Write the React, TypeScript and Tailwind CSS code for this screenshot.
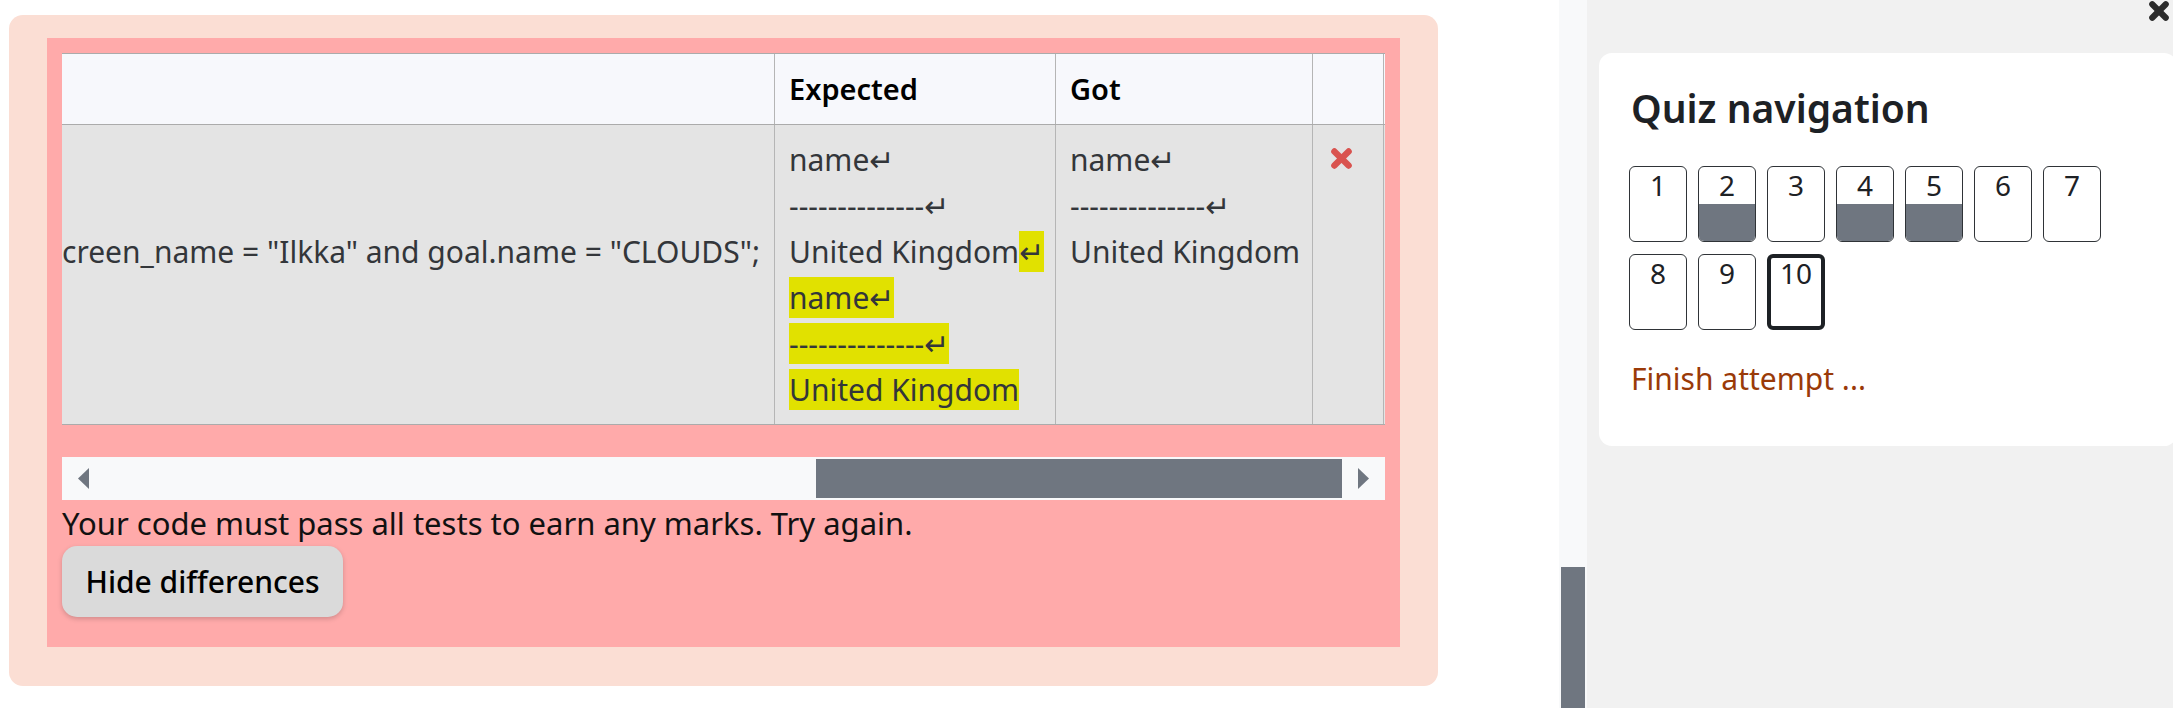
import React from "react";

const FONT = { fontFamily: '"Noto Sans", "Open Sans", "DejaVu Sans", sans-serif' };

function XIcon({ color, className }: { color: string; className: string }) {
  return (
    <svg viewBox="0 0 21 21" className={className}>
      <line x1="3.4" y1="3.4" x2="17.6" y2="17.6" stroke={color} strokeWidth="6.4" strokeLinecap="round" />
      <line x1="17.6" y1="3.4" x2="3.4" y2="17.6" stroke={color} strokeWidth="6.4" strokeLinecap="round" />
    </svg>
  );
}

function Hl({ children }: { children: React.ReactNode }) {
  return <span className="bg-[#e1e100]">{children}</span>;
}

function NavButton({ n, filled, current }: { n: number; filled?: boolean; current?: boolean }) {
  return (
    <div
      className={
        current
          ? "w-[58px] h-[76px] rounded-[6px] border-[4px] border-[#1d2125] bg-white overflow-hidden flex flex-col"
          : "w-[58px] h-[76px] rounded-[6px] border border-[#2f3337] bg-white overflow-hidden flex flex-col"
      }
    >
      <div
        className={
          current
            ? "h-[33px] leading-[31px] text-[28px] text-center text-[#1d2125]"
            : "h-[37px] leading-[37px] text-[28px] text-center text-[#1d2125]"
        }
      >
        {n}
      </div>
      <div className={filled ? "flex-1 bg-[#6f7680]" : "flex-1"} />
    </div>
  );
}

export default function App() {
  return (
    <div className="flex w-[2173px] h-[708px] overflow-hidden bg-white" style={FONT}>
      {/* Left content */}
      <div className="w-[1559px] shrink-0 pl-[9px] pt-[15px]">
        <div className="w-[1429px] h-[671px] rounded-[14px] bg-[#fbded4] pt-[23px] pl-[38px]">
          <div className="w-[1353px] h-[609px] bg-[#ffaaaa] p-[15px] flex flex-col">
            {/* Table */}
            <div className="w-[1323px] overflow-hidden text-[30px]">
              <div className="flex h-[72px] bg-[#f7f8fc] border-t border-b border-[#ababab]">
                <div className="w-[713px] shrink-0 border-r border-[#b5b5b5]" />
                <div className="w-[281px] shrink-0 border-r border-[#b5b5b5] pl-[14px] flex items-center font-semibold text-[29px] text-black">
                  Expected
                </div>
                <div className="w-[257px] shrink-0 border-r border-[#b5b5b5] pl-[14px] flex items-center font-semibold text-[29px] text-black">
                  Got
                </div>
                <div className="w-[71px] shrink-0 border-r border-[#b5b5b5]" />
              </div>
              <div className="flex h-[300px] bg-[#e4e4e4] border-b border-[#ababab] text-[#33363a]">
                <div className="w-[713px] shrink-0 border-r border-[#b5b5b5] overflow-hidden flex items-center justify-end pr-[14px]">
                  <div className="leading-[46px] pb-[46px] whitespace-pre">
                    {'where user.screen_name = "Ilkka" and goal.name = "CLOUDS";'}
                  </div>
                </div>
                <div className="w-[281px] shrink-0 border-r border-[#b5b5b5] pl-[14px] pt-[12px] leading-[46px] whitespace-pre">
                  <div>name↵</div>
                  <div>--------------↵</div>
                  <div>
                    United Kingdom<Hl>↵</Hl>
                  </div>
                  <div>
                    <Hl>name↵</Hl>
                  </div>
                  <div>
                    <Hl>--------------↵</Hl>
                  </div>
                  <div>
                    <Hl>United Kingdom</Hl>
                  </div>
                </div>
                <div className="w-[257px] shrink-0 border-r border-[#b5b5b5] pl-[14px] pt-[12px] leading-[46px] whitespace-pre">
                  <div>name↵</div>
                  <div>--------------↵</div>
                  <div>United Kingdom</div>
                </div>
                <div className="w-[71px] shrink-0 border-r border-[#b5b5b5] pl-[18px] pt-[23px]">
                  <XIcon color="#d9534f" className="w-[21px] h-[21px]" />
                </div>
              </div>
            </div>

            {/* Horizontal scrollbar */}
            <div className="mt-[32px] w-[1323px] h-[43px] bg-[#f8f9fa] flex items-center pl-[16px] pr-[16px]">
              <svg viewBox="0 0 11 21" className="w-[11px] h-[21px] shrink-0">
                <polygon points="11,0 0,10.5 11,21" fill="#6f7680" />
              </svg>
              <div className="flex-1" />
              <div className="w-[526px] h-[39px] bg-[#6f7680] shrink-0" />
              <div className="w-[16px] shrink-0" />
              <svg viewBox="0 0 11 21" className="w-[11px] h-[21px] shrink-0">
                <polygon points="0,0 11,10.5 0,21" fill="#6f7680" />
              </svg>
            </div>

            <div className="text-[31px] leading-[46px] text-[#111] whitespace-nowrap">
              Your code must pass all tests to earn any marks. Try again.
            </div>
            <button className="w-[281px] h-[71px] rounded-[15px] bg-[#dadada] text-[30px] text-black font-medium shadow-[0_2px_5px_rgba(0,0,0,0.18)] flex items-center justify-center">
              Hide differences
            </button>
          </div>
        </div>
      </div>

      {/* Vertical scrollbar */}
      <div className="w-[28px] shrink-0 bg-[#f8f9fa] flex flex-col justify-end px-[2px]">
        <div className="h-[141px] bg-[#6f7680]" />
      </div>

      {/* Right panel */}
      <div className="relative flex-1 bg-[#f1f1f1] pl-[12px] pt-[53px]">
        <XIcon color="#2b2b2b" className="absolute right-[8px] top-[1px] w-[20px] h-[20px]" />
        <div className="w-[578px] h-[393px] bg-white rounded-[13px] pl-[30px] pt-[32px]">
          <div className="text-[39px] leading-[1.2] font-semibold text-[#1d2125] pl-[2px]">Quiz navigation</div>
          <div className="mt-[34px] w-[472px] flex flex-wrap gap-x-[11px] gap-y-[12px]">
            <NavButton n={1} />
            <NavButton n={2} filled />
            <NavButton n={3} />
            <NavButton n={4} filled />
            <NavButton n={5} filled />
            <NavButton n={6} />
            <NavButton n={7} />
            <NavButton n={8} />
            <NavButton n={9} />
            <NavButton n={10} current />
          </div>
          <div className="mt-[26px] text-[30px] leading-[46px] text-[#9a3a08] pl-[2px]">Finish attempt ...</div>
        </div>
      </div>
    </div>
  );
}
